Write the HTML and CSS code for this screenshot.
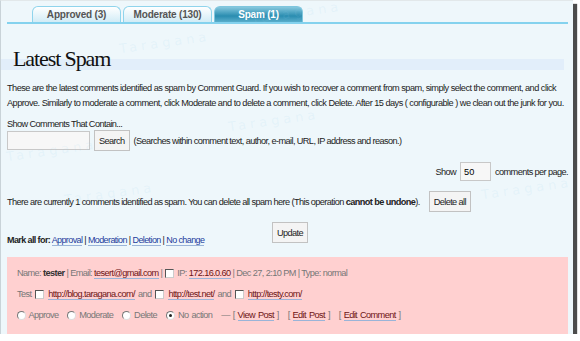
FILE: index.html
```html
<!DOCTYPE html>
<html>
<head>
    <title>Latest Spam</title>
    <link rel="stylesheet" href="styles.css">
</head>
<body>
    <div class="frame">
        <div class="tabs">
            <div class="tab">Approved (3)</div>
            <div class="tab">Moderate (130)</div>
            <div class="tab active">Spam (1)</div>
        </div>

        <h1>Latest Spam</h1>

        <p class="intro">These are the latest comments identified as spam by Comment Guard. If you wish to recover a comment from spam, simply select the comment, and click Approve. Similarly to moderate a comment, click Moderate and to delete a comment, click Delete. After 15 days ( configurable ) we clean out the junk for you.</p>

        <div class="search">
            <div class="label">Show Comments That Contain...</div>
            <div class="search-row">
                <input type="text" class="search-box">
                <button class="btn">Search</button>
                <span>(Searches within comment text, author, e-mail, URL, IP address and reason.)</span>
            </div>
        </div>

        <div class="per-page">
            Show <input type="text" class="num-box" value="50"> comments per page.
        </div>

        <div class="delete-row">
            <span>There are currently 1 comments identified as spam. You can delete all spam here (This operation <b>cannot be undone</b>).</span>
            <button class="btn">Delete all</button>
        </div>

        <div class="update-row">
            <button class="btn">Update</button>
        </div>

        <div class="mark-all">
            <b>Mark all for:</b> <a href="#">Approval</a> | <a href="#">Moderation</a> | <a href="#">Deletion</a> | <a href="#">No change</a>
        </div>

        <div class="comment">
            <div class="line">Name: <b>tester</b> | Email: <a href="#">tesert@gmail.com</a> | <span class="cb"></span> IP: <a href="#">172.16.0.60</a> | Dec 27, 2:10 PM | Type: normal</div>
            <div class="line wide">Test <span class="cb"></span> <a href="#">http://blog.taragana.com/</a> and <span class="cb"></span> <a href="#">http://test.net/</a> and <span class="cb"></span> <a href="#">http://testy.com/</a></div>
            <div class="line wide">
                <span class="radio"></span> Approve &nbsp;
                <span class="radio"></span> Moderate &nbsp;
                <span class="radio"></span> Delete &nbsp;
                <span class="radio on"></span> No action &nbsp;
                &mdash; [ <a href="#">View Post</a> ] &nbsp; [ <a href="#">Edit Post</a> ] &nbsp; [ <a href="#">Edit Comment</a> ]
            </div>
        </div>

        <div class="mark m1">Taragana</div>
        <div class="mark m2">Taragana</div>
        <div class="mark m3">Taragana</div>
        <div class="mark m4">Taragana</div>
        <div class="mark m5">Taragana</div>
        <div class="mark m6">Taragana</div>
    </div>
</body>
</html>
```

FILE: styles.css
```css
body {
    margin: 0;
    background: #fff;
    font-family: 'Liberation Sans', Arial, sans-serif;
    font-size: 9.2px;
    letter-spacing: -0.6px;
    color: #222;
}
.frame {
    position: relative;
    width: 573px;
    height: 334px;
    box-sizing: border-box;
    background: #eef7fb;
    border-left: 1px solid #c9d3d8;
    border-top: 1px solid #e2e8ea;
    box-shadow: 4px 4px 1px #4c4c4c;
    overflow: hidden;
}
.tabs {
    display: flex;
    gap: 2px;
    margin: 5px 5px 0 6px;
    padding-left: 25px;
    border-bottom: 2px solid #84d2ee;
}
.tab {
    width: 87px;
    height: 15px;
    line-height: 15px;
    text-align: center;
    font-weight: bold;
    font-size: 10px;
    letter-spacing: -0.2px;
    color: #555;
    border: 1px solid #8fd4ec;
    border-bottom: none;
    border-radius: 6px 6px 0 0;
    background: linear-gradient(to bottom, #ffffff, #d2ecf6);
}
.tab.active {
    color: #fff;
    border-color: #7ec6de;
    background: linear-gradient(to bottom, #86c8de, #2a8db0 60%, #5aaecb);
}
h1 {
    margin: 24px 9px 0 0;
    padding-left: 12px;
    font-family: 'Liberation Serif', serif;
    font-weight: normal;
    font-size: 22px;
    letter-spacing: -1.1px;
    line-height: 22px;
    color: #111;
    background: linear-gradient(to bottom, transparent 50%, #e2eefa 50%);
}
.intro {
    margin: 11px 0 0 6px;
    line-height: 15px;
    letter-spacing: -0.52px;
}
.search {
    margin: 8px 0 0 6px;
}
.label {
    line-height: 11px;
}
.search-row {
    display: flex;
    align-items: center;
    gap: 4px;
    margin-top: 0;
}
.search-box {
    width: 83px;
    height: 19px;
    box-sizing: border-box;
    border: 1px solid #c8c8c8;
    background: #f7f7f7;
    margin: 0;
}
.btn {
    font-family: inherit;
    font-size: 9.2px;
    letter-spacing: -0.6px;
    color: #222;
    height: 21px;
    padding: 0 4px;
    border: 1px solid #c2c2c2;
    background: #f4f4f4;
    margin: 0;
}
.per-page {
    display: flex;
    align-items: center;
    justify-content: flex-end;
    gap: 4px;
    margin: 11px 5px 0 0;
}
.num-box {
    width: 31px;
    height: 19px;
    box-sizing: border-box;
    border: 1px solid #c8c8c8;
    background: #f7f7f7;
    font-family: inherit;
    font-size: 9.2px;
    padding: 0 3px;
    margin: 0;
}
.delete-row {
    display: flex;
    align-items: center;
    gap: 9px;
    margin: 10px 0 0 6px;
}
.update-row {
    padding-left: 271px;
    margin-top: 10px;
    height: 21px;
}
.mark-all {
    margin: -8px 0 0 6px;
    font-size: 9px;
    height: 14px;
}
.mark-all a {
    color: #233c9c;
}
a {
    color: #1a3a8c;
    text-decoration: none;
    border-bottom: 1px solid #9ab4d8;
}
.comment {
    margin: 8px 5px 0 6px;
    height: 80px;
    background: #ffd0d0;
    padding: 7px 0 0 10px;
    box-sizing: border-box;
    color: #777;
}
.comment b {
    color: #333;
}
.comment a {
    color: #6e1414;
}
.line {
    height: 21px;
    line-height: 18px;
    white-space: nowrap;
}
.line.wide {
    word-spacing: 1px;
}
.line:last-child {
    height: 18px;
}
.cb {
    display: inline-block;
    vertical-align: middle;
    width: 7px;
    height: 7px;
    margin: 0 1px;
    border: 1px solid #555;
    border-right-color: #ccc;
    border-bottom-color: #ccc;
    background: #fff;
}
.radio {
    display: inline-block;
    vertical-align: middle;
    width: 7px;
    height: 7px;
    border-radius: 50%;
    border: 1px solid #777;
    border-right-color: #ddd;
    border-bottom-color: #ddd;
    background: #fff;
    position: relative;
}
.radio.on::after {
    content: "";
    position: absolute;
    left: 2px;
    top: 2px;
    width: 3px;
    height: 3px;
    border-radius: 50%;
    background: #222;
}
.mark {
    position: absolute;
    font-family: 'DejaVu Sans', sans-serif;
    font-size: 13px;
    letter-spacing: 4px;
    color: rgba(150, 205, 238, 0.12);
    transform: rotate(-8deg);
    pointer-events: none;
}
.m1 { left: 250px; top: 4px; }
.m2 { left: 118px; top: 34px; }
.m3 { left: 227px; top: 112px; }
.m4 { left: 5px; top: 142px; }
.m5 { left: 63px; top: 185px; }
.m6 { left: 480px; top: 180px; }
```
